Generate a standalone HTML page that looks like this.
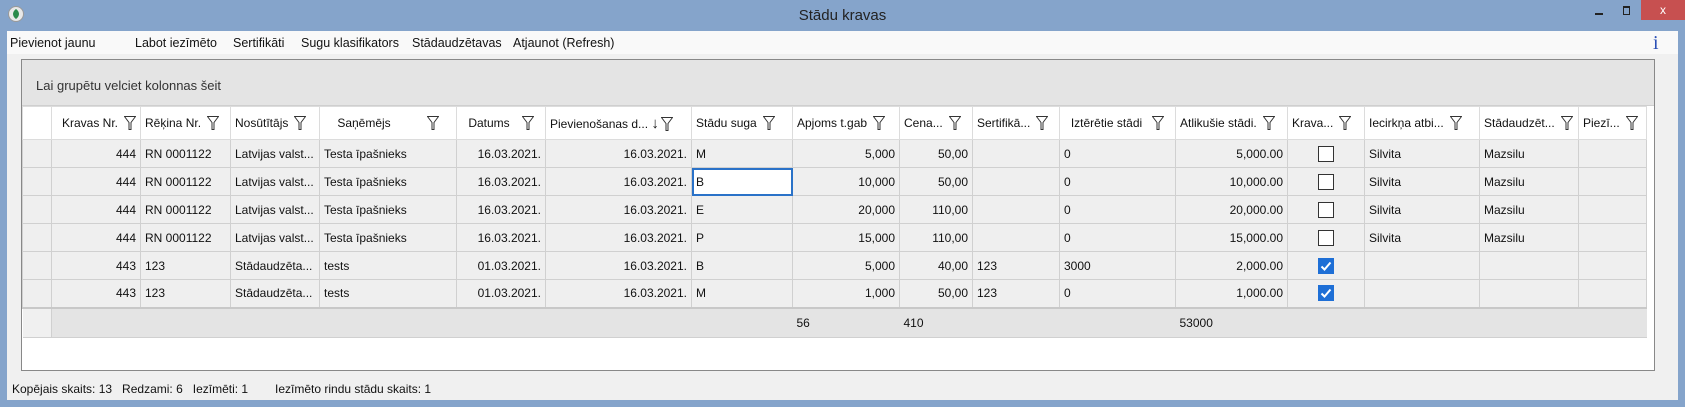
<!DOCTYPE html>
<html><head><meta charset="utf-8"><style>
*{box-sizing:border-box;margin:0;padding:0}
body{width:1685px;height:407px;background:#85a4cb;font-family:"Liberation Sans",sans-serif;font-size:12px;color:#111;position:relative;overflow:hidden}
.title{position:absolute;left:0;top:0;width:1685px;height:31px;text-align:center;line-height:31px;font-size:15px;color:#222}
.client{position:absolute;left:7px;top:31px;width:1671px;height:369px;background:#f0f0f0}
.menu{position:absolute;left:0;top:0;width:1671px;height:23px;background:#f9f9f9}
.menu span{position:absolute;top:5px;font-size:12.5px}
.grid{position:absolute;left:14px;top:28px;width:1634px;height:312px;border:1px solid #888;background:#fff}
.group{position:absolute;left:0;top:0;width:1632px;height:46px;background:#e4e4e4;border-bottom:1px solid #cfcfcf;padding:18px 0 0 14px;font-size:13px;color:#333}
table{position:absolute;left:0;top:46px;border-collapse:collapse;table-layout:fixed}
td{height:28px;border:1px solid #d0d0d0;background:#efefef;padding:0 4px;white-space:nowrap;overflow:hidden}
tr.h td{height:33px;background:#fff;border-color:#dcdcdc}
.r{text-align:right}.c{text-align:center}
.f{display:inline-block;width:12px;height:14px;vertical-align:middle;margin-left:6px}
.cb{display:inline-block;width:16px;height:16px;border:1px solid #333;background:#fff;vertical-align:middle}
tr.ft td{background:#e4e4e4;height:30px;border:none;border-top:2px solid #c8c8c8;border-bottom:1px solid #d0d0d0}
.status{position:absolute;top:351px;font-size:12px}
</style></head><body>
<div class="title">Stādu kravas</div>
<svg style="position:absolute;left:8px;top:6px" width="16" height="16"><circle cx="8" cy="8" r="7.5" fill="#e8e8e8" stroke="#999"/><path d="M8 3 C4 6 4 10 8 13 C12 10 12 6 8 3Z" fill="#2a8a4a"/></svg>
<div style="position:absolute;left:1595px;top:13px;width:8px;height:2px;background:#222"></div>
<div style="position:absolute;left:1623px;top:6px;width:7px;height:9px;border:1px solid #222;border-top-width:2px"></div>
<div style="position:absolute;left:1641px;top:0;width:44px;height:20px;background:#c75050;color:#fff;text-align:center;line-height:20px;font-size:12px">x</div>
<div class="client">
<div class="menu">
<span style="left:3px">Pievienot jaunu</span><span style="left:128px">Labot iezīmēto</span><span style="left:226px">Sertifikāti</span><span style="left:294px">Sugu klasifikators</span><span style="left:405px">Stādaudzētavas</span><span style="left:506px">Atjaunot (Refresh)</span>
<span style="left:1646px;top:1px;font-family:'Liberation Serif',serif;font-size:20px;color:#2b4fb5">i</span>
</div>
<div class="grid">
<div class="group">Lai grupētu velciet kolonnas šeit</div>
<table>
<colgroup><col style="width:29px"><col style="width:89px"><col style="width:90px"><col style="width:89px"><col style="width:137px"><col style="width:89px"><col style="width:146px"><col style="width:101px"><col style="width:107px"><col style="width:73px"><col style="width:87px"><col style="width:116px"><col style="width:112px"><col style="width:77px"><col style="width:115px"><col style="width:99px"><col style="width:68px"></colgroup>
<tr class="h"><td></td><td class="r">Kravas Nr.<svg class="f"><path d="M0.5 0.5H11.5L7 6.5V13.5H5V6.5Z" fill="none" stroke="#333"/></svg></td><td>Rēķina Nr.<svg class="f"><path d="M0.5 0.5H11.5L7 6.5V13.5H5V6.5Z" fill="none" stroke="#333"/></svg></td><td>Nosūtītājs<svg class="f"><path d="M0.5 0.5H11.5L7 6.5V13.5H5V6.5Z" fill="none" stroke="#333"/></svg></td><td class="c">Saņēmējs<svg class="f" style="margin-left:36px"><path d="M0.5 0.5H11.5L7 6.5V13.5H5V6.5Z" fill="none" stroke="#333"/></svg></td><td class="c">Datums<svg class="f" style="margin-left:12px"><path d="M0.5 0.5H11.5L7 6.5V13.5H5V6.5Z" fill="none" stroke="#333"/></svg></td><td>Pievienošanas d... <span style="font-size:15px">↓</span><svg class="f" style="margin-left:2px"><path d="M0.5 0.5H11.5L7 6.5V13.5H5V6.5Z" fill="none" stroke="#333"/></svg></td><td>Stādu suga<svg class="f"><path d="M0.5 0.5H11.5L7 6.5V13.5H5V6.5Z" fill="none" stroke="#333"/></svg></td><td>Apjoms t.gab<svg class="f"><path d="M0.5 0.5H11.5L7 6.5V13.5H5V6.5Z" fill="none" stroke="#333"/></svg></td><td>Cena...<svg class="f"><path d="M0.5 0.5H11.5L7 6.5V13.5H5V6.5Z" fill="none" stroke="#333"/></svg></td><td>Sertifikā...<svg class="f"><path d="M0.5 0.5H11.5L7 6.5V13.5H5V6.5Z" fill="none" stroke="#333"/></svg></td><td class="c">Iztērētie stādi<svg class="f" style="margin-left:10px"><path d="M0.5 0.5H11.5L7 6.5V13.5H5V6.5Z" fill="none" stroke="#333"/></svg></td><td>Atlikušie stādi.<svg class="f"><path d="M0.5 0.5H11.5L7 6.5V13.5H5V6.5Z" fill="none" stroke="#333"/></svg></td><td>Krava...<svg class="f"><path d="M0.5 0.5H11.5L7 6.5V13.5H5V6.5Z" fill="none" stroke="#333"/></svg></td><td>Iecirkņa atbi...<svg class="f"><path d="M0.5 0.5H11.5L7 6.5V13.5H5V6.5Z" fill="none" stroke="#333"/></svg></td><td>Stādaudzēt...<svg class="f"><path d="M0.5 0.5H11.5L7 6.5V13.5H5V6.5Z" fill="none" stroke="#333"/></svg></td><td>Piezī...<svg class="f"><path d="M0.5 0.5H11.5L7 6.5V13.5H5V6.5Z" fill="none" stroke="#333"/></svg></td></tr>
<tr><td></td><td class="r">444</td><td>RN 0001122</td><td>Latvijas valst...</td><td>Testa īpašnieks</td><td class="r">16.03.2021.</td><td class="r">16.03.2021.</td><td>M</td><td class="r">5,000</td><td class="r">50,00</td><td></td><td>0</td><td class="r">5,000.00</td><td class="c"><span class="cb"></span></td><td>Silvita</td><td>Mazsilu</td><td></td></tr>
<tr><td></td><td class="r">444</td><td>RN 0001122</td><td>Latvijas valst...</td><td>Testa īpašnieks</td><td class="r">16.03.2021.</td><td class="r">16.03.2021.</td><td style="background:#fff;outline:2px solid #2a72c8;outline-offset:-2px">B</td><td class="r">10,000</td><td class="r">50,00</td><td></td><td>0</td><td class="r">10,000.00</td><td class="c"><span class="cb"></span></td><td>Silvita</td><td>Mazsilu</td><td></td></tr>
<tr><td></td><td class="r">444</td><td>RN 0001122</td><td>Latvijas valst...</td><td>Testa īpašnieks</td><td class="r">16.03.2021.</td><td class="r">16.03.2021.</td><td>E</td><td class="r">20,000</td><td class="r">110,00</td><td></td><td>0</td><td class="r">20,000.00</td><td class="c"><span class="cb"></span></td><td>Silvita</td><td>Mazsilu</td><td></td></tr>
<tr><td></td><td class="r">444</td><td>RN 0001122</td><td>Latvijas valst...</td><td>Testa īpašnieks</td><td class="r">16.03.2021.</td><td class="r">16.03.2021.</td><td>P</td><td class="r">15,000</td><td class="r">110,00</td><td></td><td>0</td><td class="r">15,000.00</td><td class="c"><span class="cb"></span></td><td>Silvita</td><td>Mazsilu</td><td></td></tr>
<tr><td></td><td class="r">443</td><td>123</td><td>Stādaudzēta...</td><td>tests</td><td class="r">01.03.2021.</td><td class="r">16.03.2021.</td><td>B</td><td class="r">5,000</td><td class="r">40,00</td><td>123</td><td>3000</td><td class="r">2,000.00</td><td class="c"><svg width="16" height="16" style="vertical-align:middle"><rect width="16" height="16" fill="#1e6fd6"/><path d="M3.5 8.5L6.5 11.5L12.5 4.5" fill="none" stroke="#fff" stroke-width="2"/></svg></td><td></td><td></td><td></td></tr>
<tr><td></td><td class="r">443</td><td>123</td><td>Stādaudzēta...</td><td>tests</td><td class="r">01.03.2021.</td><td class="r">16.03.2021.</td><td>M</td><td class="r">1,000</td><td class="r">50,00</td><td>123</td><td>0</td><td class="r">1,000.00</td><td class="c"><svg width="16" height="16" style="vertical-align:middle"><rect width="16" height="16" fill="#1e6fd6"/><path d="M3.5 8.5L6.5 11.5L12.5 4.5" fill="none" stroke="#fff" stroke-width="2"/></svg></td><td></td><td></td><td></td></tr>
<tr class="ft"><td style="background:#f0f0f0;border-right:1px solid #d0d0d0"></td><td colspan="7"></td><td>56</td><td colspan="3">410</td><td colspan="5">53000</td></tr>
</table>
</div>
<div class="status" style="left:5px">Kopējais skaits: 13 &nbsp; Redzami: 6 &nbsp; Iezīmēti: 1</div>
<div class="status" style="left:268px">Iezīmēto rindu stādu skaits: 1</div>
</div>
</body></html>
